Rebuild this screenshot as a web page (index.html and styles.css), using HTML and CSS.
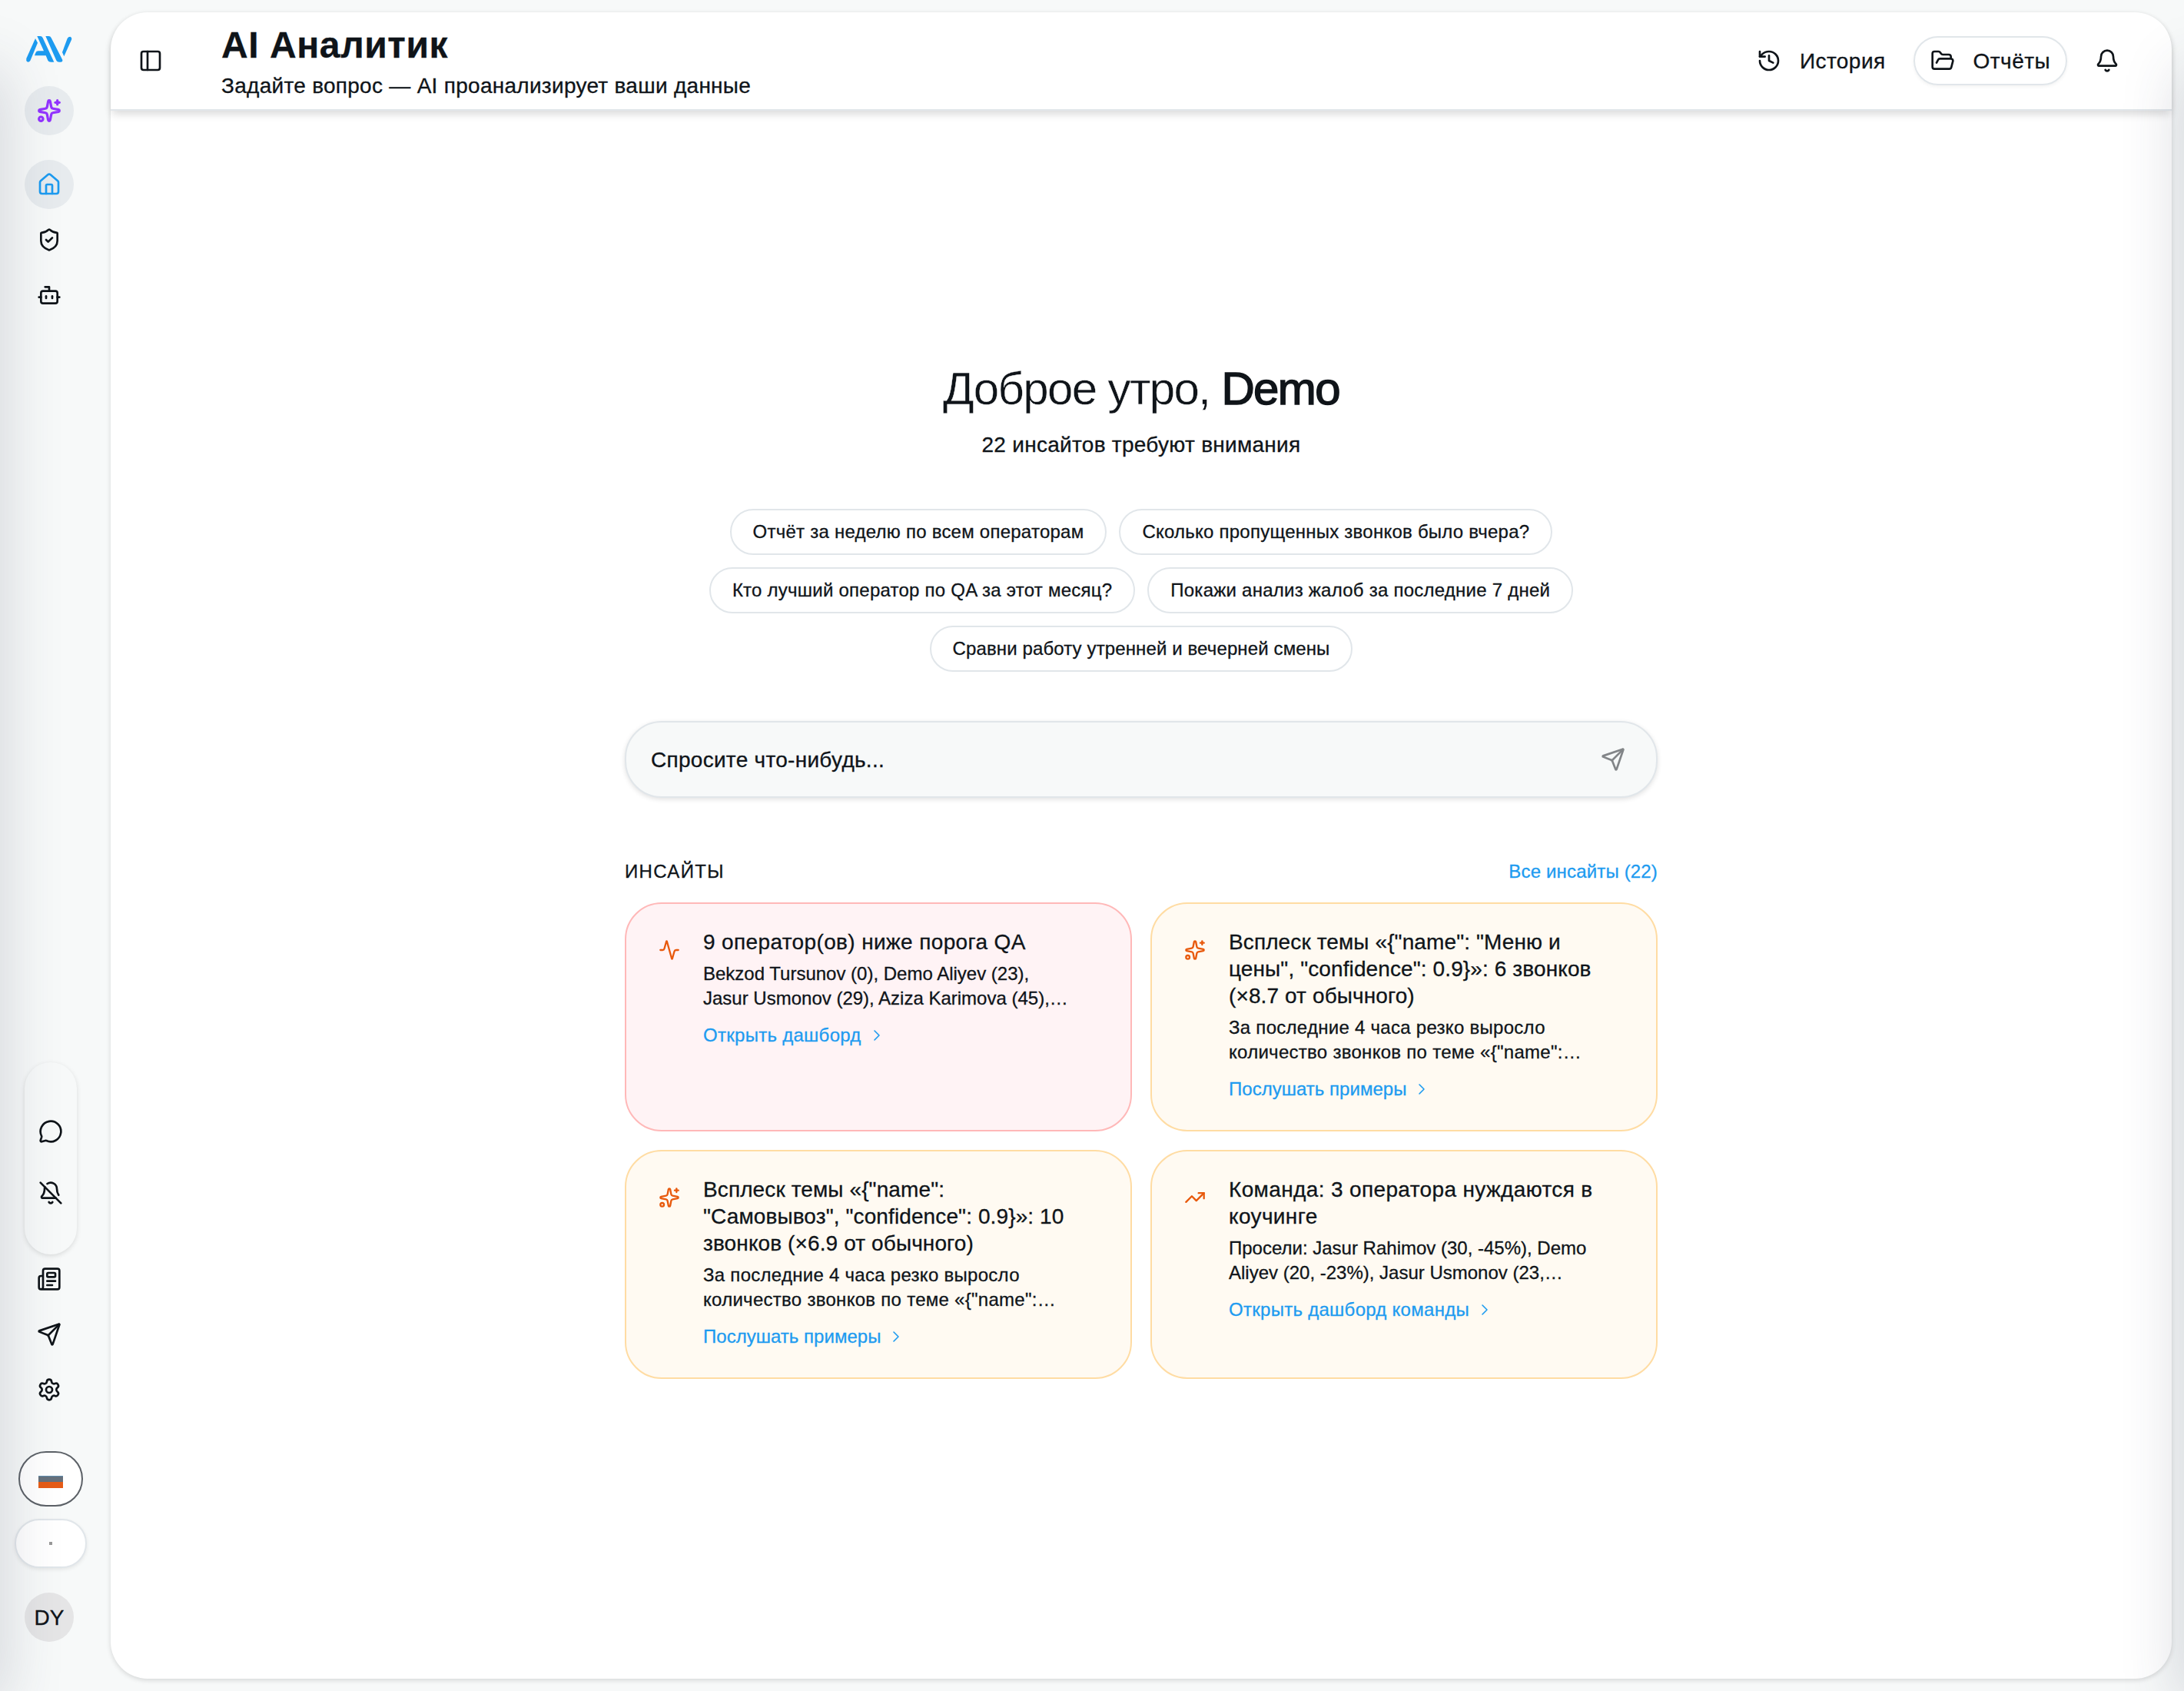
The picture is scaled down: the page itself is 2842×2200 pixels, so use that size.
FILE: index.html
```html
<!DOCTYPE html>
<html lang="ru">
<head>
    <meta charset="UTF-8">
    <meta name="viewport" content="width=device-width, initial-scale=1.0">
    <title>AI Аналитик</title>
    <link rel="stylesheet" href="styles.css">
</head>
<body>
    <svg class="sprite" xmlns="http://www.w3.org/2000/svg">
        <symbol id="i-sparkles" viewBox="0 0 24 24"><path d="M11.017 2.814a1 1 0 0 1 1.966 0l1.051 5.558a2 2 0 0 0 1.594 1.594l5.558 1.051a1 1 0 0 1 0 1.966l-5.558 1.051a2 2 0 0 0-1.594 1.594l-1.051 5.558a1 1 0 0 1-1.966 0l-1.051-5.558a2 2 0 0 0-1.594-1.594l-5.558-1.051a1 1 0 0 1 0-1.966l5.558-1.051a2 2 0 0 0 1.594-1.594z"/><path d="M20 2v4"/><path d="M22 4h-4"/><circle cx="4" cy="20" r="2"/></symbol>
        <symbol id="i-house" viewBox="0 0 24 24"><path d="M15 21v-8a1 1 0 0 0-1-1h-4a1 1 0 0 0-1 1v8"/><path d="M3 10a2 2 0 0 1 .709-1.528l7-6a2 2 0 0 1 2.582 0l7 6A2 2 0 0 1 21 10v9a2 2 0 0 1-2 2H5a2 2 0 0 1-2-2z"/></symbol>
        <symbol id="i-shield" viewBox="0 0 24 24"><path d="M20 13c0 5-3.5 7.5-7.66 8.95a1 1 0 0 1-.67-.01C7.5 20.5 4 18 4 13V6a1 1 0 0 1 1-1c2 0 4.5-1.2 6.24-2.72a1.17 1.17 0 0 1 1.52 0C14.51 3.81 17 5 19 5a1 1 0 0 1 1 1z"/><path d="m9 12 2 2 4-4"/></symbol>
        <symbol id="i-bot" viewBox="0 0 24 24"><path d="M12 8V4H8"/><rect width="16" height="12" x="4" y="8" rx="2"/><path d="M2 14h2"/><path d="M20 14h2"/><path d="M15 13v2"/><path d="M9 13v2"/></symbol>
        <symbol id="i-message" viewBox="0 0 24 24"><path d="M2.992 16.342a2 2 0 0 1 .094 1.167l-1.065 3.29a1 1 0 0 0 1.236 1.168l3.413-.998a2 2 0 0 1 1.099.092 10 10 0 1 0-4.777-4.719"/></symbol>
        <symbol id="i-bell-off" viewBox="0 0 24 24"><path d="M10.268 21a2 2 0 0 0 3.464 0"/><path d="M17 17H4a1 1 0 0 1-.74-1.673C4.59 13.956 6 12.499 6 8a6 6 0 0 1 .258-1.742"/><path d="m2 2 20 20"/><path d="M8.668 3.01A6 6 0 0 1 18 8c0 2.687.77 4.653 1.707 6.05"/></symbol>
        <symbol id="i-news" viewBox="0 0 24 24"><path d="M15 18h-5"/><path d="M18 14h-8"/><path d="M4 22h16a2 2 0 0 0 2-2V4a2 2 0 0 0-2-2H8a2 2 0 0 0-2 2v16a2 2 0 0 1-4 0v-9a2 2 0 0 1 2-2h2"/><rect width="8" height="4" x="10" y="6" rx="1"/></symbol>
        <symbol id="i-send" viewBox="0 0 24 24"><path d="M14.536 21.686a.5.5 0 0 0 .937-.024l6.5-19a.496.496 0 0 0-.635-.635l-19 6.5a.5.5 0 0 0-.024.937l7.93 3.18a2 2 0 0 1 1.112 1.11z"/><path d="m21.854 2.147-10.94 10.939"/></symbol>
        <symbol id="i-settings" viewBox="0 0 24 24"><path d="M9.671 4.136a2.34 2.34 0 0 1 4.659 0 2.34 2.34 0 0 0 3.319 1.915 2.34 2.34 0 0 1 2.33 4.033 2.34 2.34 0 0 0 0 3.831 2.34 2.34 0 0 1-2.33 4.033 2.34 2.34 0 0 0-3.319 1.915 2.34 2.34 0 0 1-4.659 0 2.34 2.34 0 0 0-3.32-1.915 2.34 2.34 0 0 1-2.33-4.033 2.34 2.34 0 0 0 0-3.831A2.34 2.34 0 0 1 6.35 6.051a2.34 2.34 0 0 0 3.319-1.915"/><circle cx="12" cy="12" r="3"/></symbol>
        <symbol id="i-panel" viewBox="0 0 24 24"><rect width="18" height="18" x="3" y="3" rx="2"/><path d="M9 3v18"/></symbol>
        <symbol id="i-history" viewBox="0 0 24 24"><path d="M3 12a9 9 0 1 0 9-9 9.75 9.75 0 0 0-6.74 2.74L3 8"/><path d="M3 3v5h5"/><path d="M12 7v5l4 2"/></symbol>
        <symbol id="i-folder" viewBox="0 0 24 24"><path d="m6 14 1.5-2.9A2 2 0 0 1 9.24 10H20a2 2 0 0 1 1.94 2.5l-1.54 6a2 2 0 0 1-1.95 1.5H4a2 2 0 0 1-2-2V5a2 2 0 0 1 2-2h3.9a2 2 0 0 1 1.69.9l.81 1.2a2 2 0 0 0 1.67.9H18a2 2 0 0 1 2 2v2"/></symbol>
        <symbol id="i-bell" viewBox="0 0 24 24"><path d="M10.268 21a2 2 0 0 0 3.464 0"/><path d="M3.262 15.326A1 1 0 0 0 4 17h16a1 1 0 0 0 .74-1.673C19.41 13.956 18 12.499 18 8A6 6 0 0 0 6 8c0 4.499-1.411 5.956-2.738 7.326"/></symbol>
        <symbol id="i-activity" viewBox="0 0 24 24"><path d="M22 12h-2.48a2 2 0 0 0-1.93 1.46l-2.35 8.36a.25.25 0 0 1-.48 0L9.24 2.18a.25.25 0 0 0-.48 0l-2.35 8.36A2 2 0 0 1 4.49 12H2"/></symbol>
        <symbol id="i-trend" viewBox="0 0 24 24"><path d="M16 7h6v6"/><path d="m22 7-8.5 8.5-5-5L2 17"/></symbol>
        <symbol id="i-chevron" viewBox="0 0 24 24"><path d="m9 18 6-6-6-6"/></symbol>
    </svg>

    <aside class="sidebar">
        <svg class="logo" viewBox="100 138 186 108">
            <path d="M139 150 148 167 119 237Q114 244 107 241 102 237 104 228Z"/>
            <path d="M146 141H158Q165 141 168 148L212 242H200Q191 242 188 236L180 217H136L140 206Q143 199 150 199H172Z"/>
            <path d="M179 141H191Q198 141 201 148L245 234Q246 242 238 242H232Q224 242 221 236Z"/>
            <path d="M244 204 264 150Q268 143 275 143 283 146 280 155L251 220Z"/>
        </svg>
        <a class="nav-btn active ai"><svg class="icon"><use href="#i-sparkles"/></svg></a>
        <nav class="nav">
            <a class="nav-btn active home"><svg class="icon"><use href="#i-house"/></svg></a>
            <a class="nav-btn"><svg class="icon"><use href="#i-shield"/></svg></a>
            <a class="nav-btn"><svg class="icon"><use href="#i-bot"/></svg></a>
        </nav>
        <div class="bottom">
            <div class="tools">
                <svg class="icon"><use href="#i-message"/></svg>
                <svg class="icon"><use href="#i-bell-off"/></svg>
            </div>
            <a class="nav-btn"><svg class="icon"><use href="#i-news"/></svg></a>
            <a class="nav-btn"><svg class="icon"><use href="#i-send"/></svg></a>
            <a class="nav-btn"><svg class="icon"><use href="#i-settings"/></svg></a>
            <div class="lang"><span class="flag"></span></div>
            <div class="theme"><span class="dot"></span></div>
            <div class="avatar">DY</div>
        </div>
    </aside>

    <main class="panel">
        <header class="header">
            <svg class="icon"><use href="#i-panel"/></svg>
            <div class="heading">
                <h1>AI Аналитик</h1>
                <p>Задайте вопрос — AI проанализирует ваши данные</p>
            </div>
            <div class="actions">
                <a class="action"><svg class="icon"><use href="#i-history"/></svg><span>История</span></a>
                <a class="action outlined"><svg class="icon"><use href="#i-folder"/></svg><span>Отчёты</span></a>
                <svg class="icon"><use href="#i-bell"/></svg>
            </div>
        </header>

        <section class="content">
            <h2 class="greeting">Доброе утро, <b>Demo</b></h2>
            <p class="subtitle">22 инсайтов требуют внимания</p>

            <div class="chips">
                <button class="chip">Отчёт за неделю по всем операторам</button>
                <button class="chip">Сколько пропущенных звонков было вчера?</button>
                <button class="chip">Кто лучший оператор по QA за этот месяц?</button>
                <button class="chip">Покажи анализ жалоб за последние 7 дней</button>
                <button class="chip">Сравни работу утренней и вечерней смены</button>
            </div>

            <div class="ask">
                <span>Спросите что-нибудь...</span>
                <svg class="icon"><use href="#i-send"/></svg>
            </div>

            <div class="insights-head">
                <h3>ИНСАЙТЫ</h3>
                <a>Все инсайты (22)</a>
            </div>
            <div class="insights">
                <article class="card danger">
                    <div class="card-icon"><svg class="icon"><use href="#i-activity"/></svg></div>
                    <div>
                        <h4>9 оператор(ов) ниже порога QA</h4>
                        <p class="latin">Bekzod Tursunov (0), Demo Aliyev (23),<br>Jasur Usmonov (29), Aziza Karimova (45),…</p>
                        <a class="more">Открыть дашборд<svg class="icon"><use href="#i-chevron"/></svg></a>
                    </div>
                </article>
                <article class="card topic">
                    <div class="card-icon"><svg class="icon"><use href="#i-sparkles"/></svg></div>
                    <div>
                        <h4>Всплеск темы «{"name": "Меню и<br>цены", "confidence": 0.9}»: 6 звонков<br>(×8.7 от обычного)</h4>
                        <p>За последние 4 часа резко выросло<br>количество звонков по теме «{"name":…</p>
                        <a class="more">Послушать примеры<svg class="icon"><use href="#i-chevron"/></svg></a>
                    </div>
                </article>
                <article class="card topic">
                    <div class="card-icon"><svg class="icon"><use href="#i-sparkles"/></svg></div>
                    <div>
                        <h4>Всплеск темы «{"name":<br>"Самовывоз", "confidence": 0.9}»: 10<br>звонков (×6.9 от обычного)</h4>
                        <p>За последние 4 часа резко выросло<br>количество звонков по теме «{"name":…</p>
                        <a class="more">Послушать примеры<svg class="icon"><use href="#i-chevron"/></svg></a>
                    </div>
                </article>
                <article class="card">
                    <div class="card-icon"><svg class="icon"><use href="#i-trend"/></svg></div>
                    <div>
                        <h4>Команда: 3 оператора нуждаются в<br>коучинге</h4>
                        <p class="latin">Просели: Jasur Rahimov (30, -45%), Demo<br>Aliyev (20, -23%), Jasur Usmonov (23,…</p>
                        <a class="more">Открыть дашборд команды<svg class="icon"><use href="#i-chevron"/></svg></a>
                    </div>
                </article>
            </div>
        </section>
    </main>
    <div class="glow"></div>
</body>
</html>
```
FILE: styles.css
```css
* {
    box-sizing: border-box;
    margin: 0;
    padding: 0;
}
body {
    display: flex;
    width: 2842px;
    height: 2200px;
    overflow: hidden;
    background: #f7f9f9;
    color: #0f1419;
    font-family: "Liberation Sans", Arial, sans-serif;
    font-size: 28px;
    letter-spacing: 0.01em;
    -webkit-text-stroke: 0.3px currentColor;
}
.sprite {
    display: none;
}
.icon {
    display: block;
    flex: none;
    width: 32px;
    height: 32px;
    fill: none;
    stroke: currentColor;
    stroke-width: 2;
    stroke-linecap: round;
    stroke-linejoin: round;
}

/* sidebar */
.sidebar {
    display: flex;
    flex-direction: column;
    width: 144px;
    padding: 46px 0 64px 32px;
}
.logo {
    width: 62px;
    height: 36px;
    margin: 0 0 30px 1px;
    fill: #1d9bf0;
}
.nav {
    display: flex;
    flex-direction: column;
    gap: 8px;
    margin-top: 32px;
}
.nav-btn {
    display: flex;
    align-items: center;
    justify-content: center;
    flex: none;
    width: 64px;
    height: 64px;
    border-radius: 50%;
}
.nav-btn.active {
    background: #e7ebee;
}
.nav-btn.ai {
    color: #9333ff;
}
.nav-btn.ai .icon {
    stroke-width: 2.4;
}
.nav-btn.home {
    color: #1d9bf0;
}
.bottom {
    display: flex;
    flex-direction: column;
    margin-top: auto;
}
.bottom .nav-btn + .nav-btn {
    margin-top: 8px;
}
.tools {
    display: flex;
    flex-direction: column;
    align-items: center;
    justify-content: center;
    gap: 48px;
    width: 68px;
    height: 250px;
    padding-top: 10px;
    border-radius: 34px;
    background: #f7f9f9;
    box-shadow: 0 2px 6px rgba(0, 0, 0, 0.12);
}
.lang {
    display: flex;
    align-items: center;
    justify-content: center;
    width: 84px;
    height: 72px;
    margin: 48px 0 0 -8px;
    border: 2px solid #5b6066;
    border-radius: 36px;
    background: #fff;
}
.flag {
    width: 32px;
    height: 24px;
    background: linear-gradient(#fff 8px, #5aa9e0 8px, #66717c 9px, #66717c 16px, #e65c17 16px);
}
.theme {
    display: flex;
    align-items: center;
    justify-content: center;
    width: 94px;
    height: 64px;
    margin: 16px 0 0 -13px;
    border: 2px solid #e1e6ea;
    border-radius: 32px;
    background: #fff;
    box-shadow: 0 2px 5px rgba(0, 0, 0, 0.08);
}
.dot {
    width: 4px;
    height: 4px;
    background: #999;
}
.avatar {
    width: 64px;
    height: 64px;
    margin-top: 32px;
    border-radius: 50%;
    background: #e5e5e6;
    line-height: 65px;
    text-align: center;
    letter-spacing: 0;
}

/* main panel */
.panel {
    width: 2682px;
    height: 2168px;
    margin-top: 16px;
    border-radius: 48px;
    background: #fff;
    box-shadow: 0 2px 6px rgba(0, 0, 0, 0.14);
}
.header {
    display: flex;
    align-items: center;
    height: 128px;
    padding: 0 68px 0 36px;
    border-bottom: 2px solid #e1e6ea;
    border-radius: 48px 48px 0 0;
    box-shadow: 0 6px 12px -2px rgba(0, 0, 0, 0.16);
}
.heading {
    margin: 8px 0 0 76px;
}
.heading h1 {
    font-size: 48px;
    line-height: 48px;
    letter-spacing: 0.012em;
}
.heading p {
    margin-top: 9px;
    line-height: 40px;
}
.actions {
    display: flex;
    align-items: center;
    gap: 36px;
    margin-left: auto;
}
.action {
    display: flex;
    align-items: center;
    gap: 24px;
    letter-spacing: 0.016em;
}
.action span {
    padding-top: 1px;
}
.outlined {
    height: 64px;
    padding: 0 20px;
    border: 2px solid #e1e6ea;
    border-radius: 32px;
    box-shadow: 0 2px 4px rgba(0, 0, 0, 0.05);
}
.content {
    width: 1344px;
    margin: 0 auto;
    padding-top: 324px;
}
.greeting {
    font-size: 60px;
    font-weight: 400;
    line-height: 75px;
    letter-spacing: -0.027em;
    text-align: center;
    -webkit-text-stroke: 0.4px #fff;
}
.greeting b {
    font-weight: 400;
    -webkit-text-stroke: 1.5px #0f1419;
}
.subtitle {
    margin-top: 16px;
    line-height: 40px;
    text-align: center;
}
.chips {
    display: flex;
    flex-wrap: wrap;
    justify-content: center;
    gap: 16px;
    width: 1200px;
    margin: 63px auto 0;
}
.chip {
    height: 60px;
    padding: 0 28px;
    border: 2px solid #e1e6ea;
    border-radius: 30px;
    background: #fff;
    color: inherit;
    font: inherit;
    font-size: 24px;
    letter-spacing: 0.01em;
}
.chip:last-child {
    letter-spacing: 0.005em;
}
.ask {
    display: flex;
    align-items: center;
    justify-content: space-between;
    height: 100px;
    margin-top: 64px;
    padding: 0 40px 0 32px;
    border: 2px solid #e1e6ea;
    border-radius: 48px;
    background: #f7f9f9;
    box-shadow: 0 2px 6px rgba(0, 0, 0, 0.12);
}
.ask span {
    padding-top: 2px;
}
.ask .icon {
    opacity: 0.5;
}
.insights-head {
    display: flex;
    justify-content: space-between;
    margin-top: 80px;
    font-size: 24px;
    line-height: 32px;
}
.insights-head h3 {
    font-size: 24px;
    font-weight: 400;
    letter-spacing: 0.055em;
}
.insights-head a {
    color: #1d9bf0;
    letter-spacing: 0.007em;
}
.insights {
    display: grid;
    grid-template-columns: 1fr 1fr;
    gap: 24px;
    margin-top: 24px;
}
.card {
    display: flex;
    gap: 20px;
    height: 298px;
    padding: 32px;
    border: 2px solid #ffdca3;
    border-radius: 48px;
    background: #fffaf2;
    white-space: nowrap;
}
.card.danger {
    border-color: #ffb8b8;
    background: #fff3f5;
}
.card-icon {
    display: flex;
    align-items: center;
    justify-content: center;
    width: 48px;
    height: 48px;
    margin-top: 4px;
    color: #e8590c;
}
.card-icon .icon {
    width: 28px;
    height: 28px;
}
.card h4 {
    font-size: 28px;
    font-weight: 400;
    line-height: 35px;
    letter-spacing: 0.013em;
}
.card p {
    margin-top: 8px;
    font-size: 24px;
    line-height: 32px;
}
.card .latin {
    letter-spacing: 0;
}
.more {
    display: flex;
    align-items: center;
    gap: 8px;
    margin-top: 16px;
    color: #1d9bf0;
    font-size: 24px;
    line-height: 32px;
}
.more .icon {
    width: 24px;
    height: 24px;
    stroke-width: 1.6;
}
.topic h4 {
    letter-spacing: 0.004em;
}
.topic .more {
    letter-spacing: 0.001em;
}

/* soft shade along the window edges */
.glow::before,
.glow::after {
    content: "";
    position: absolute;
    top: 90px;
    bottom: -20px;
    width: 60px;
    box-shadow: 0 0 80px rgba(50, 55, 80, 0.22);
    pointer-events: none;
}
.glow::before {
    left: -60px;
}
.glow::after {
    left: 2842px;
}
```
